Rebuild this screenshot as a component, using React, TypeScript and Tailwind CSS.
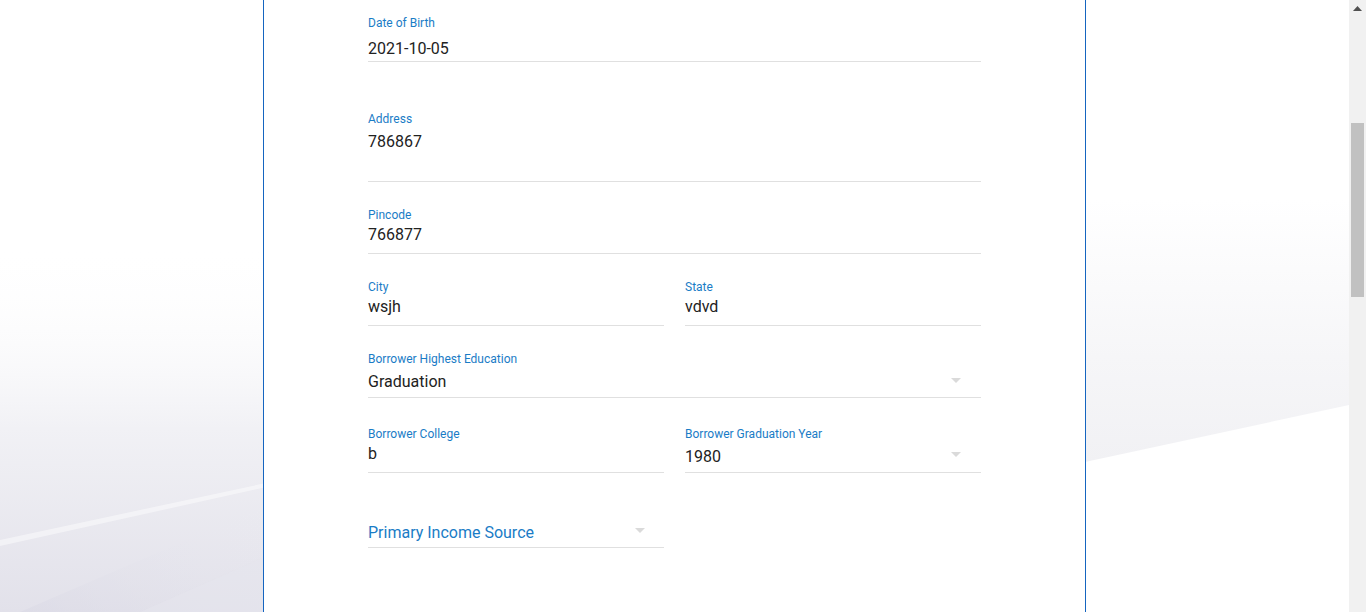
import React from 'react';

const labelClass = 'block text-[12px] leading-4 text-[#1a7cc6]';
const valueClass = 'text-[16px] leading-6 text-[#222222]';

const Arrow: React.FC<{ top: string }> = ({ top }) => (
  <svg width="10" height="5" viewBox="0 0 10 5" className={`absolute right-[20px] ${top}`}>
    <path d="M0 0 L10 0 L5 5 Z" fill="#dadada" />
  </svg>
);

interface FieldProps {
  label: string;
  value: string;
  valueTop?: string;
  areaHeight: string;
  select?: boolean;
}

const Field: React.FC<FieldProps> = ({ label, value, valueTop = 'mt-0', areaHeight, select = false }) => (
  <div className="flex-1">
    <label className={labelClass}>{label}</label>
    <div className={`relative border-b border-[#e0e0e0] ${valueTop} ${areaHeight}`}>
      <div className={valueClass}>{value}</div>
      {select && <Arrow top="top-[8px]" />}
    </div>
  </div>
);

const Background: React.FC = () => (
  <svg className="absolute inset-0 h-full w-full" viewBox="0 0 1349 612" preserveAspectRatio="none">
    <defs>
      <linearGradient id="leftFade" x1="0" y1="0" x2="0" y2="1">
        <stop offset="0" stopColor="#ffffff" stopOpacity="0" />
        <stop offset="0.4" stopColor="#ffffff" stopOpacity="0" />
        <stop offset="0.7" stopColor="#f1f1f5" />
        <stop offset="1" stopColor="#e2e1ea" />
      </linearGradient>
      <linearGradient id="ray" x1="0" y1="1" x2="1" y2="0">
        <stop offset="0" stopColor="#dad9e5" />
        <stop offset="1" stopColor="#eeeef3" stopOpacity="0" />
      </linearGradient>
      <linearGradient id="rightFade" x1="0" y1="0" x2="0" y2="1">
        <stop offset="0" stopColor="#ffffff" />
        <stop offset="0.6" stopColor="#f6f6f8" />
        <stop offset="1" stopColor="#f1f1f4" />
      </linearGradient>
    </defs>
    <rect x="0" y="0" width="1349" height="612" fill="#ffffff" />
    <rect x="0" y="0" width="300" height="612" fill="url(#leftFade)" />
    <path d="M0 540 L280 480 L280 484 L0 546 Z" fill="#ffffff" opacity="0.45" />
    <path d="M20 612 L280 500 L280 612 Z" fill="url(#ray)" opacity="0.6" />
    <path d="M140 612 L280 550 L280 612 Z" fill="#e6e5ee" opacity="0.5" />
    <path d="M1085 200 L1349 200 L1349 405 L1085 462 Z" fill="url(#rightFade)" />
  </svg>
);

const App: React.FC = () => {
  return (
    <div className="flex h-[612px] w-full overflow-hidden font-['Roboto','Liberation_Sans',sans-serif]">
      <div className="relative flex-1">
        <Background />
        <div className="relative mx-auto h-full w-[823px] border-x border-[#1565c0] bg-white px-[104px]">
          <div className="flex flex-col pt-[15px]">
            <Field label="Date of Birth" value="2021-10-05" valueTop="mt-[6px]" areaHeight="h-[25px]" />

            <div className="mt-[49px]">
              <Field label="Address" value="786867" valueTop="mt-[3px]" areaHeight="h-[52px]" />
            </div>

            <div className="mt-[25px]">
              <Field label="Pincode" value="766877" areaHeight="h-[31px]" />
            </div>

            <div className="mt-[25px] flex gap-[21px]">
              <Field label="City" value="wsjh" areaHeight="h-[31px]" />
              <Field label="State" value="vdvd" areaHeight="h-[31px]" />
            </div>

            <div className="mt-[25px]">
              <Field
                label="Borrower Highest Education"
                value="Graduation"
                valueTop="mt-[3px]"
                areaHeight="h-[28px]"
                select
              />
            </div>

            <div className="mt-[28px] flex gap-[21px]">
              <Field label="Borrower College" value="b" areaHeight="h-[31px]" />
              <div className="flex-1">
                <label className={labelClass}>Borrower Graduation Year</label>
                <div className="relative h-[31px] border-b border-[#e0e0e0] pt-[3px]">
                  <div className={valueClass}>1980</div>
                  <Arrow top="top-[10px]" />
                </div>
              </div>
            </div>

            <div className="mt-[48px] flex gap-[21px]">
              <div className="relative h-[27px] flex-1 border-b border-[#e0e0e0]">
                <div className="text-[16px] leading-6 text-[#1a7cc6]">Primary Income Source</div>
                <svg width="10" height="5" viewBox="0 0 10 5" className="absolute right-[19px] top-[7px]">
                  <path d="M0 0 L10 0 L5 5 Z" fill="#dadada" />
                </svg>
              </div>
              <div className="flex-1" />
            </div>
          </div>
        </div>
      </div>

      <div className="relative w-[17px] bg-[#f1f1f1]">
        <svg width="9" height="5" viewBox="0 0 9 5" className="absolute left-[4px] top-[6px]">
          <path d="M0 5 L9 5 L4.5 0 Z" fill="#505050" />
        </svg>
        <div className="absolute left-[2px] top-[123px] h-[174px] w-[13px] bg-[#c1c1c1]" />
      </div>
    </div>
  );
};

export default App;
